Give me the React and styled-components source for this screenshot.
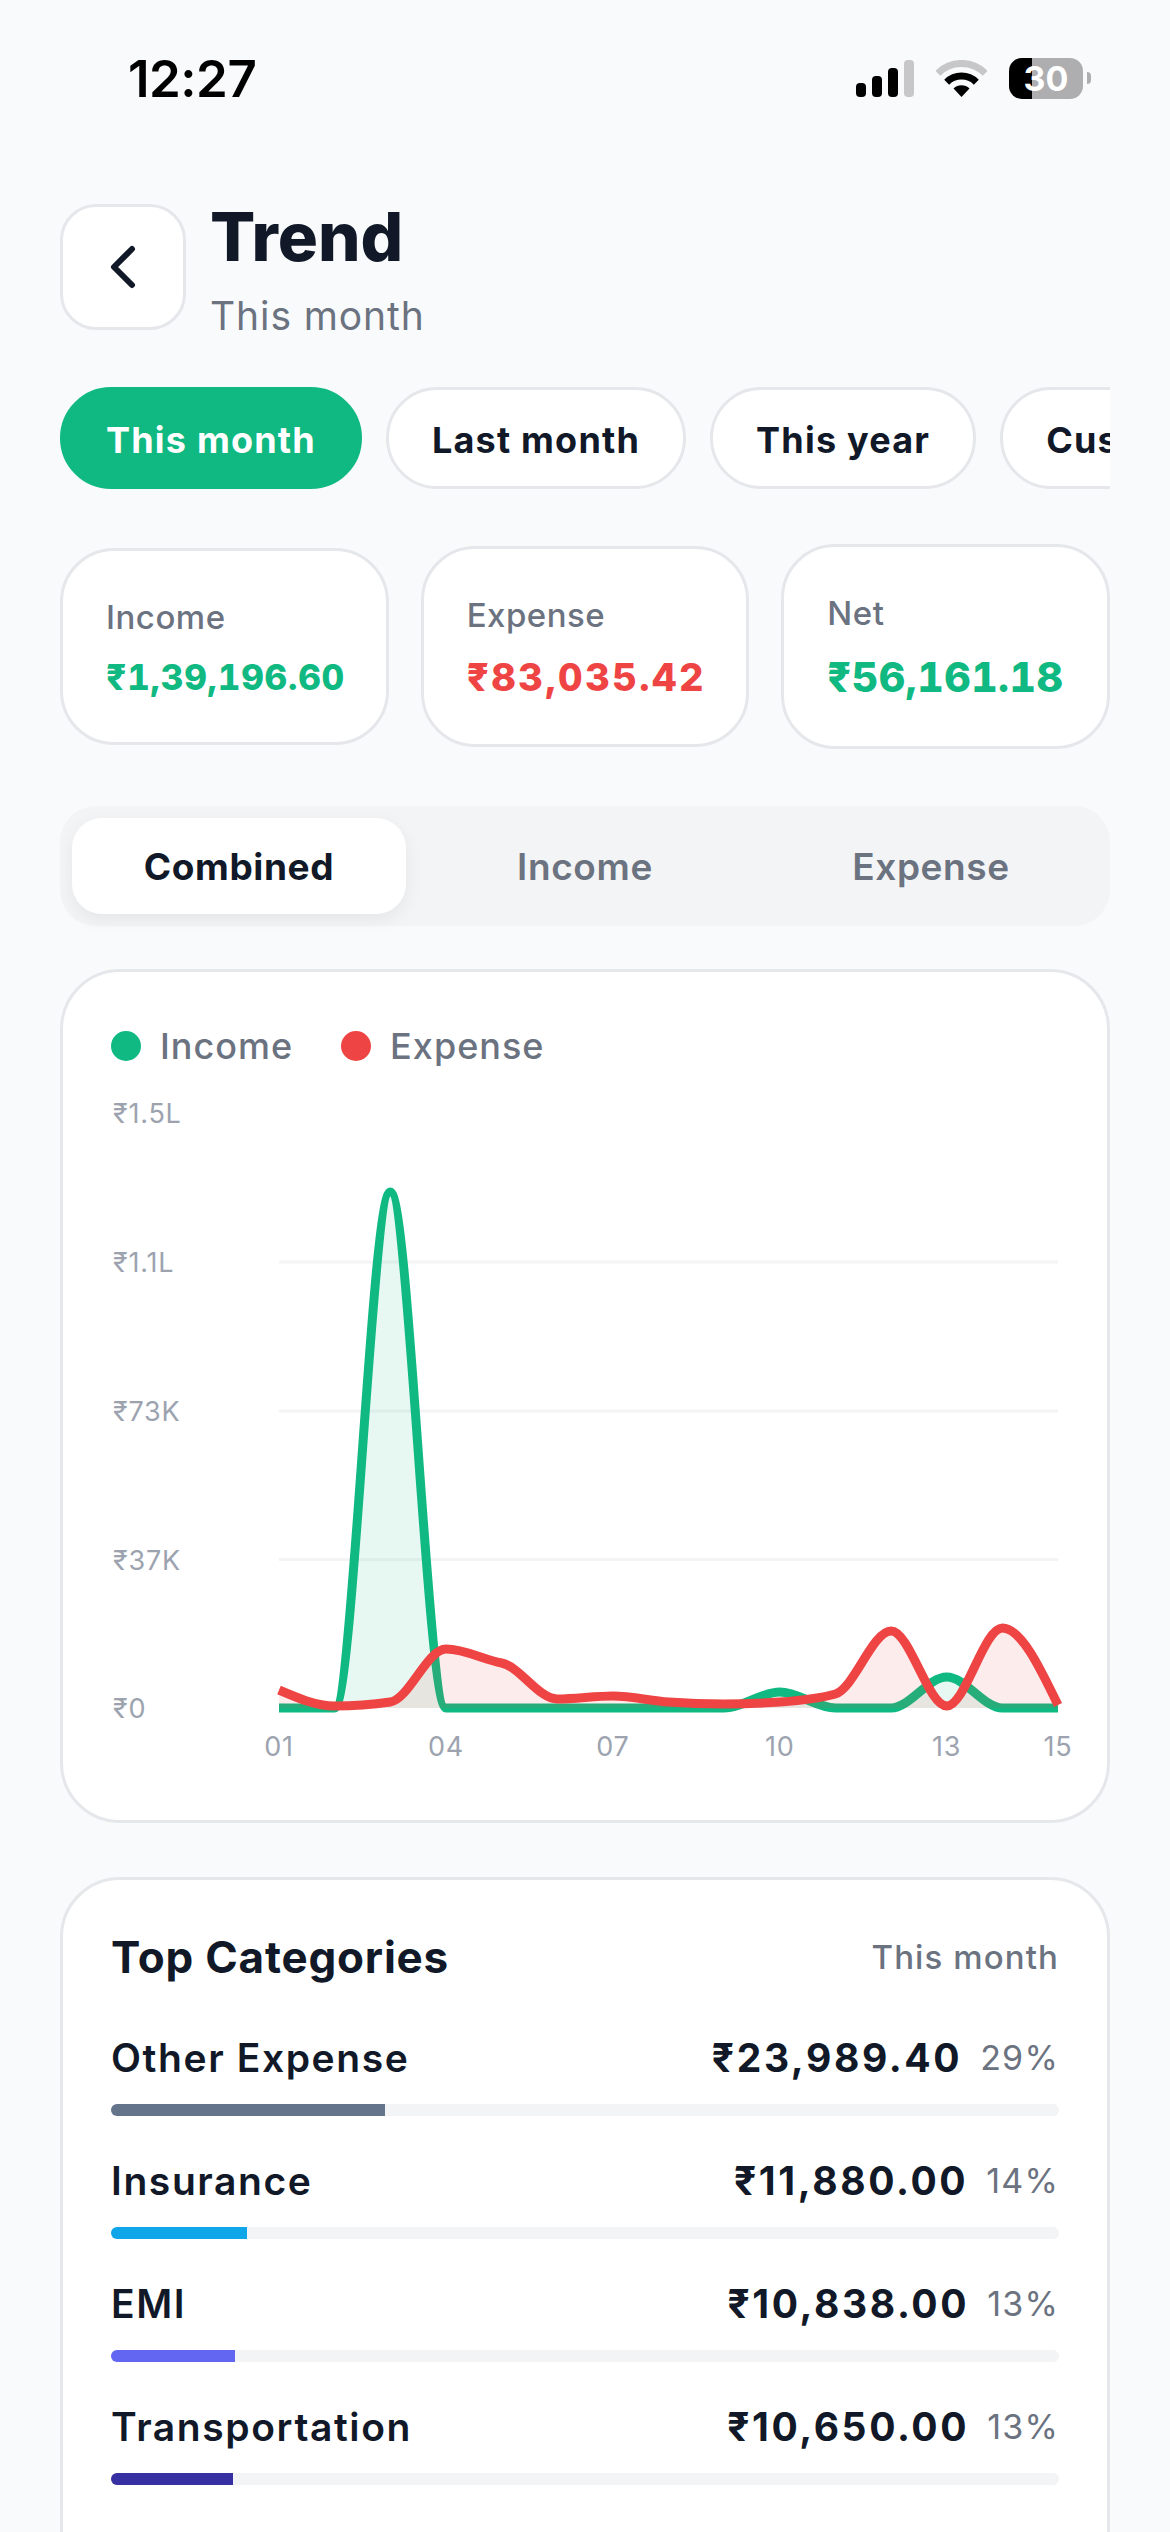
import React from "react";
import styled, { createGlobalStyle } from "styled-components";
import { ChevronLeft } from "lucide-react";

const GlobalStyle = createGlobalStyle`
  html, body {
    margin: 0;
    padding: 0;
    background: #f9fafb;
  }
  #root {
    width: 1170px;
    height: 2532px;
    overflow: hidden;
  }
  * {
    box-sizing: border-box;
  }
`;

const Page = styled.div`
  width: 1170px;
  height: 2532px;
  overflow: hidden;
  background: #f9fafb;
  font-family: Inter, "Noto Sans", sans-serif;
  color: #111827;
`;

const StatusBar = styled.div`
  height: 156px;
  padding: 0 79px 0 128px;
  display: flex;
  align-items: center;
  justify-content: space-between;
`;
const Time = styled.div`
  font-size: 51px;
  font-weight: 600;
  color: #000;
  letter-spacing: -0.5px;
`;
const StatusIcons = styled.div`
  display: flex;
  align-items: center;
  gap: 22px;
`;
const Battery = styled.div`
  display: flex;
  align-items: center;
  gap: 4px;
`;
const BatteryBody = styled.div`
  width: 74px;
  height: 41px;
  border-radius: 13px;
  background: linear-gradient(to right, #000 31%, #aeaeb0 31%);
  color: #fff;
  font-size: 34px;
  font-weight: 700;
  line-height: 41px;
  text-align: center;
`;
const BatteryNub = styled.div`
  width: 4px;
  height: 12px;
  border-radius: 0 4px 4px 0;
  background: #aeaeb0;
`;

const Content = styled.div`
  padding: 0 60px;
`;

const Header = styled.div`
  margin-top: 48px;
  display: flex;
  gap: 24px;
`;
const BackButton = styled.div`
  width: 126px;
  height: 126px;
  border: 3px solid #e5e7eb;
  border-radius: 36px;
  background: #fff;
  display: flex;
  align-items: center;
  justify-content: center;
  color: #111827;
`;
const Title = styled.div`
  font-size: 67px;
  font-weight: 800;
  line-height: 78px;
  margin-top: -6px;
`;
const Subtitle = styled.div`
  margin-top: 16px;
  font-size: 39px;
  line-height: 48px;
  color: #6b7280;
  letter-spacing: 0.9px;
`;

const Chips = styled.div`
  margin-top: 47px;
  display: flex;
  gap: 24px;
  overflow: hidden;
`;
const Chip = styled.div`
  flex: none;
  height: 102px;
  padding: 3px 43px 0;
  border-radius: 51px;
  border: 3px solid ${(p) => (p.$active ? "#10b981" : "#e5e7eb")};
  background: ${(p) => (p.$active ? "#10b981" : "#fff")};
  color: ${(p) => (p.$active ? "#fff" : "#111827")};
  font-size: 36px;
  font-weight: 700;
  letter-spacing: 1.2px;
  display: flex;
  align-items: center;
`;

const Summary = styled.div`
  margin-top: 55px;
  display: flex;
  align-items: center;
  gap: 32px;
`;
const SummaryCard = styled.div`
  flex: 1 1 0;
  min-width: 0;
  padding: 45px 43px 42px;
  border: 3px solid #e5e7eb;
  border-radius: 54px;
  background: #fff;
`;
const SummaryLabel = styled.div`
  font-size: 33px;
  line-height: 42px;
  font-weight: 500;
  color: #6b7280;
  letter-spacing: 0.5px;
`;
const SummaryValue = styled.div`
  margin-top: 17px;
  font-size: ${(p) => p.$size}px;
  line-height: 1.3;
  font-weight: 800;
  white-space: nowrap;
  font-variant-numeric: tabular-nums;
  color: ${(p) => p.$color};
  letter-spacing: ${(p) => p.$spacing}px;
`;

const Segments = styled.div`
  margin-top: 57px;
  height: 120px;
  padding: 12px;
  border-radius: 36px;
  background: #f3f4f6;
  display: flex;
  gap: 12px;
`;
const Segment = styled.div`
  flex: 1;
  border-radius: 30px;
  display: flex;
  align-items: center;
  justify-content: center;
  font-size: 37px;
  font-weight: ${(p) => (p.$active ? 700 : 600)};
  letter-spacing: 0.6px;
  color: ${(p) => (p.$active ? "#111827" : "#6b7280")};
  background: ${(p) => (p.$active ? "#fff" : "transparent")};
  box-shadow: ${(p) => (p.$active ? "0 6px 18px rgba(0, 0, 0, 0.06)" : "none")};
`;

const Card = styled.div`
  border: 3px solid #e5e7eb;
  border-radius: 60px;
  background: #fff;
`;
const ChartCard = styled(Card)`
  margin-top: 43px;
  padding: 49px 48px 48px;
`;
const Legend = styled.div`
  display: flex;
  align-items: center;
  gap: 48px;
  height: 50px;
`;
const LegendItem = styled.div`
  display: flex;
  align-items: center;
  gap: 19px;
  font-size: 36px;
  font-weight: 500;
  letter-spacing: 1px;
  color: #6b7280;
`;
const Dot = styled.span`
  width: 30px;
  height: 30px;
  border-radius: 50%;
  background: ${(p) => p.$color};
`;
const ChartSvg = styled.svg`
  display: block;
  margin-top: 21px;
  overflow: visible;
  text {
    font-family: Inter, "Noto Sans", sans-serif;
    font-size: 27px;
    letter-spacing: 0.8px;
    fill: #9ca3af;
  }
`;

const CategoriesCard = styled(Card)`
  margin-top: 54px;
  padding: 49px 48px 140px;
`;
const CategoriesHeader = styled.div`
  display: flex;
  align-items: center;
  justify-content: space-between;
  height: 56px;
  margin-bottom: 47px;
`;
const CategoriesTitle = styled.div`
  font-size: 44px;
  font-weight: 700;
  letter-spacing: 0.8px;
`;
const CategoriesNote = styled.div`
  font-size: 33px;
  font-weight: 500;
  letter-spacing: 1.1px;
  color: #6b7280;
`;
const CategoryList = styled.div`
  display: flex;
  flex-direction: column;
  gap: 39px;
`;
const CategoryTop = styled.div`
  display: flex;
  align-items: center;
  justify-content: space-between;
  height: 50px;
`;
const CategoryName = styled.div`
  font-size: 39px;
  font-weight: 600;
  letter-spacing: 1.6px;
`;
const CategoryRight = styled.div`
  display: flex;
  align-items: center;
  gap: 18px;
`;
const CategoryAmount = styled.div`
  font-size: 39px;
  font-weight: 700;
  letter-spacing: 2.6px;
`;
const CategoryPct = styled.div`
  font-size: 34px;
  color: #6b7280;
  letter-spacing: 1.2px;
`;
const Track = styled.div`
  margin-top: 22px;
  height: 12px;
  border-radius: 6px;
  background: #f3f4f6;
  overflow: hidden;
`;
const Fill = styled.div`
  height: 100%;
  background: ${(p) => p.$color};
`;

const WifiIcon = () => (
  <svg width="51" height="37" viewBox="0 0 51 37">
    <path d="M1.8 13.3A33.5 33.5 0 0 1 49.2 13.3" fill="none" stroke="#c7c7c9" strokeWidth="7" />
    <path d="M10.7 22.2A21 21 0 0 1 40.3 22.2" fill="none" stroke="#000" strokeWidth="7" />
    <path d="M25.5 37L17.5 28.5A11.5 11.5 0 0 1 33.5 28.5Z" fill="#000" />
  </svg>
);

const SignalIcon = () => (
  <svg width="58" height="37" viewBox="0 0 58 37">
    <rect x="0" y="23" width="10" height="14" rx="4" fill="#000" />
    <rect x="16" y="16" width="10" height="21" rx="4" fill="#000" />
    <rect x="32" y="8" width="10" height="29" rx="4" fill="#000" />
    <rect x="48" y="0" width="10" height="37" rx="4" fill="#c7c7c9" />
  </svg>
);

// chart is in page pixels, shifted to the svg's corner
const originX = 111;
const originY = 1090;
const x0 = 279 - originX;
const step = 779 / 14;
const base = 1706 - originY;
const toY = (y) => y - originY;

const incomeLine = [1706, 1706, 1190, 1706, 1706, 1706, 1706, 1706, 1706, 1690, 1706, 1706, 1675, 1706, 1706].map(toY);
const expenseLine = [1688, 1704, 1700, 1647, 1661, 1697, 1694, 1700, 1702, 1700, 1692, 1629, 1704, 1626, 1703].map(toY);

const monotone = (ys, override = {}) => {
  const s = ys.slice(1).map((y, i) => (y - ys[i]) / step);
  const sign = (v) => (v < 0 ? -1 : 1);
  const t = ys.map((_, i) => {
    if (i === 0 || i === ys.length - 1) return null;
    if (override[i] !== undefined) return override[i];
    const a = s[i - 1];
    const b = s[i];
    return (sign(a) + sign(b)) * Math.min(Math.abs(a), Math.abs(b), 0.5 * Math.abs((a + b) / 2)) || 0;
  });
  t[0] = (3 * s[0] - t[1]) / 2;
  t[ys.length - 1] = (3 * s[s.length - 1] - t[ys.length - 2]) / 2;
  let d = `M${x0} ${ys[0]}`;
  for (let i = 1; i < ys.length; i++) {
    const xa = x0 + step * (i - 1);
    const xb = x0 + step * i;
    d += `C${xa + step / 3} ${ys[i - 1] + (step / 3) * t[i - 1]} ${xb - step / 3} ${ys[i] - (step / 3) * t[i]} ${xb} ${ys[i]}`;
  }
  return d;
};
const area = (d) => `${d}L${x0 + step * 14} ${base}L${x0} ${base}Z`;

const yLabels = [
  { text: "₹1.5L", y: 1111 },
  { text: "₹1.1L", y: 1260 },
  { text: "₹73K", y: 1409 },
  { text: "₹37K", y: 1557.5 },
  { text: "₹0", y: 1706 },
];
const xLabels = [
  { text: "01", i: 0 },
  { text: "04", i: 3 },
  { text: "07", i: 6 },
  { text: "10", i: 9 },
  { text: "13", i: 12 },
  { text: "15", i: 14 },
];

const Chart = () => {
  const income = monotone(incomeLine);
  const expense = monotone(expenseLine, { 4: 0.2 });
  return (
    <ChartSvg width="948" height="680" viewBox="0 0 948 680">
      {yLabels.slice(1, 4).map((l) => (
        <line key={l.text} x1={x0} x2={x0 + step * 14} y1={toY(l.y)} y2={toY(l.y)} stroke="#f3f4f6" strokeWidth="3" />
      ))}
      {yLabels.map((l) => (
        <text key={l.text} x="2" y={toY(l.y) + 10}>
          {l.text}
        </text>
      ))}
      <path d={area(income)} fill="rgba(16, 185, 129, 0.1)" />
      <path d={income} fill="none" stroke="#10b981" strokeWidth="9" />
      <path d={area(expense)} fill="rgba(239, 68, 68, 0.1)" />
      <path d={expense} fill="none" stroke="#ef4444" strokeWidth="9" />
      {xLabels.map((l) => (
        <text key={l.text} x={x0 + step * l.i} y="664" textAnchor="middle">
          {l.text}
        </text>
      ))}
    </ChartSvg>
  );
};

const categories = [
  { name: "Other Expense", amount: "₹23,989.40", pct: 29, share: 28.9, color: "#64748b" },
  { name: "Insurance", amount: "₹11,880.00", pct: 14, share: 14.3, color: "#0ea5e9" },
  { name: "EMI", amount: "₹10,838.00", pct: 13, share: 13.05, color: "#6366f1" },
  { name: "Transportation", amount: "₹10,650.00", pct: 13, share: 12.83, color: "#3730a3" },
];

const App = () => (
  <Page>
    <GlobalStyle />
    <StatusBar>
      <Time>12:27</Time>
      <StatusIcons>
        <SignalIcon />
        <WifiIcon />
        <Battery>
          <BatteryBody>30</BatteryBody>
          <BatteryNub />
        </Battery>
      </StatusIcons>
    </StatusBar>
    <Content>
      <Header>
        <BackButton>
          <ChevronLeft size={72} strokeWidth={2} />
        </BackButton>
        <div>
          <Title>Trend</Title>
          <Subtitle>This month</Subtitle>
        </div>
      </Header>

      <Chips>
        <Chip $active>This month</Chip>
        <Chip>Last month</Chip>
        <Chip>This year</Chip>
        <Chip>Custom</Chip>
      </Chips>

      <Summary>
        <SummaryCard>
          <SummaryLabel>Income</SummaryLabel>
          <SummaryValue $size={35} $spacing={0.8} $color="#10b981">₹1,39,196.60</SummaryValue>
        </SummaryCard>
        <SummaryCard>
          <SummaryLabel>Expense</SummaryLabel>
          <SummaryValue $size={38} $spacing={2.5} $color="#ef4444">₹83,035.42</SummaryValue>
        </SummaryCard>
        <SummaryCard>
          <SummaryLabel>Net</SummaryLabel>
          <SummaryValue $size={41} $spacing={0.5} $color="#10b981">₹56,161.18</SummaryValue>
        </SummaryCard>
      </Summary>

      <Segments>
        <Segment $active>Combined</Segment>
        <Segment>Income</Segment>
        <Segment>Expense</Segment>
      </Segments>

      <ChartCard>
        <Legend>
          <LegendItem>
            <Dot $color="#10b981" />
            Income
          </LegendItem>
          <LegendItem>
            <Dot $color="#ef4444" />
            Expense
          </LegendItem>
        </Legend>
        <Chart />
      </ChartCard>

      <CategoriesCard>
        <CategoriesHeader>
          <CategoriesTitle>Top Categories</CategoriesTitle>
          <CategoriesNote>This month</CategoriesNote>
        </CategoriesHeader>
        <CategoryList>
          {categories.map((c) => (
            <div key={c.name}>
              <CategoryTop>
                <CategoryName>{c.name}</CategoryName>
                <CategoryRight>
                  <CategoryAmount>{c.amount}</CategoryAmount>
                  <CategoryPct>{c.pct}%</CategoryPct>
                </CategoryRight>
              </CategoryTop>
              <Track>
                <Fill $color={c.color} style={{ width: `${c.share}%` }} />
              </Track>
            </div>
          ))}
        </CategoryList>
      </CategoriesCard>
    </Content>
  </Page>
);

export default App;
